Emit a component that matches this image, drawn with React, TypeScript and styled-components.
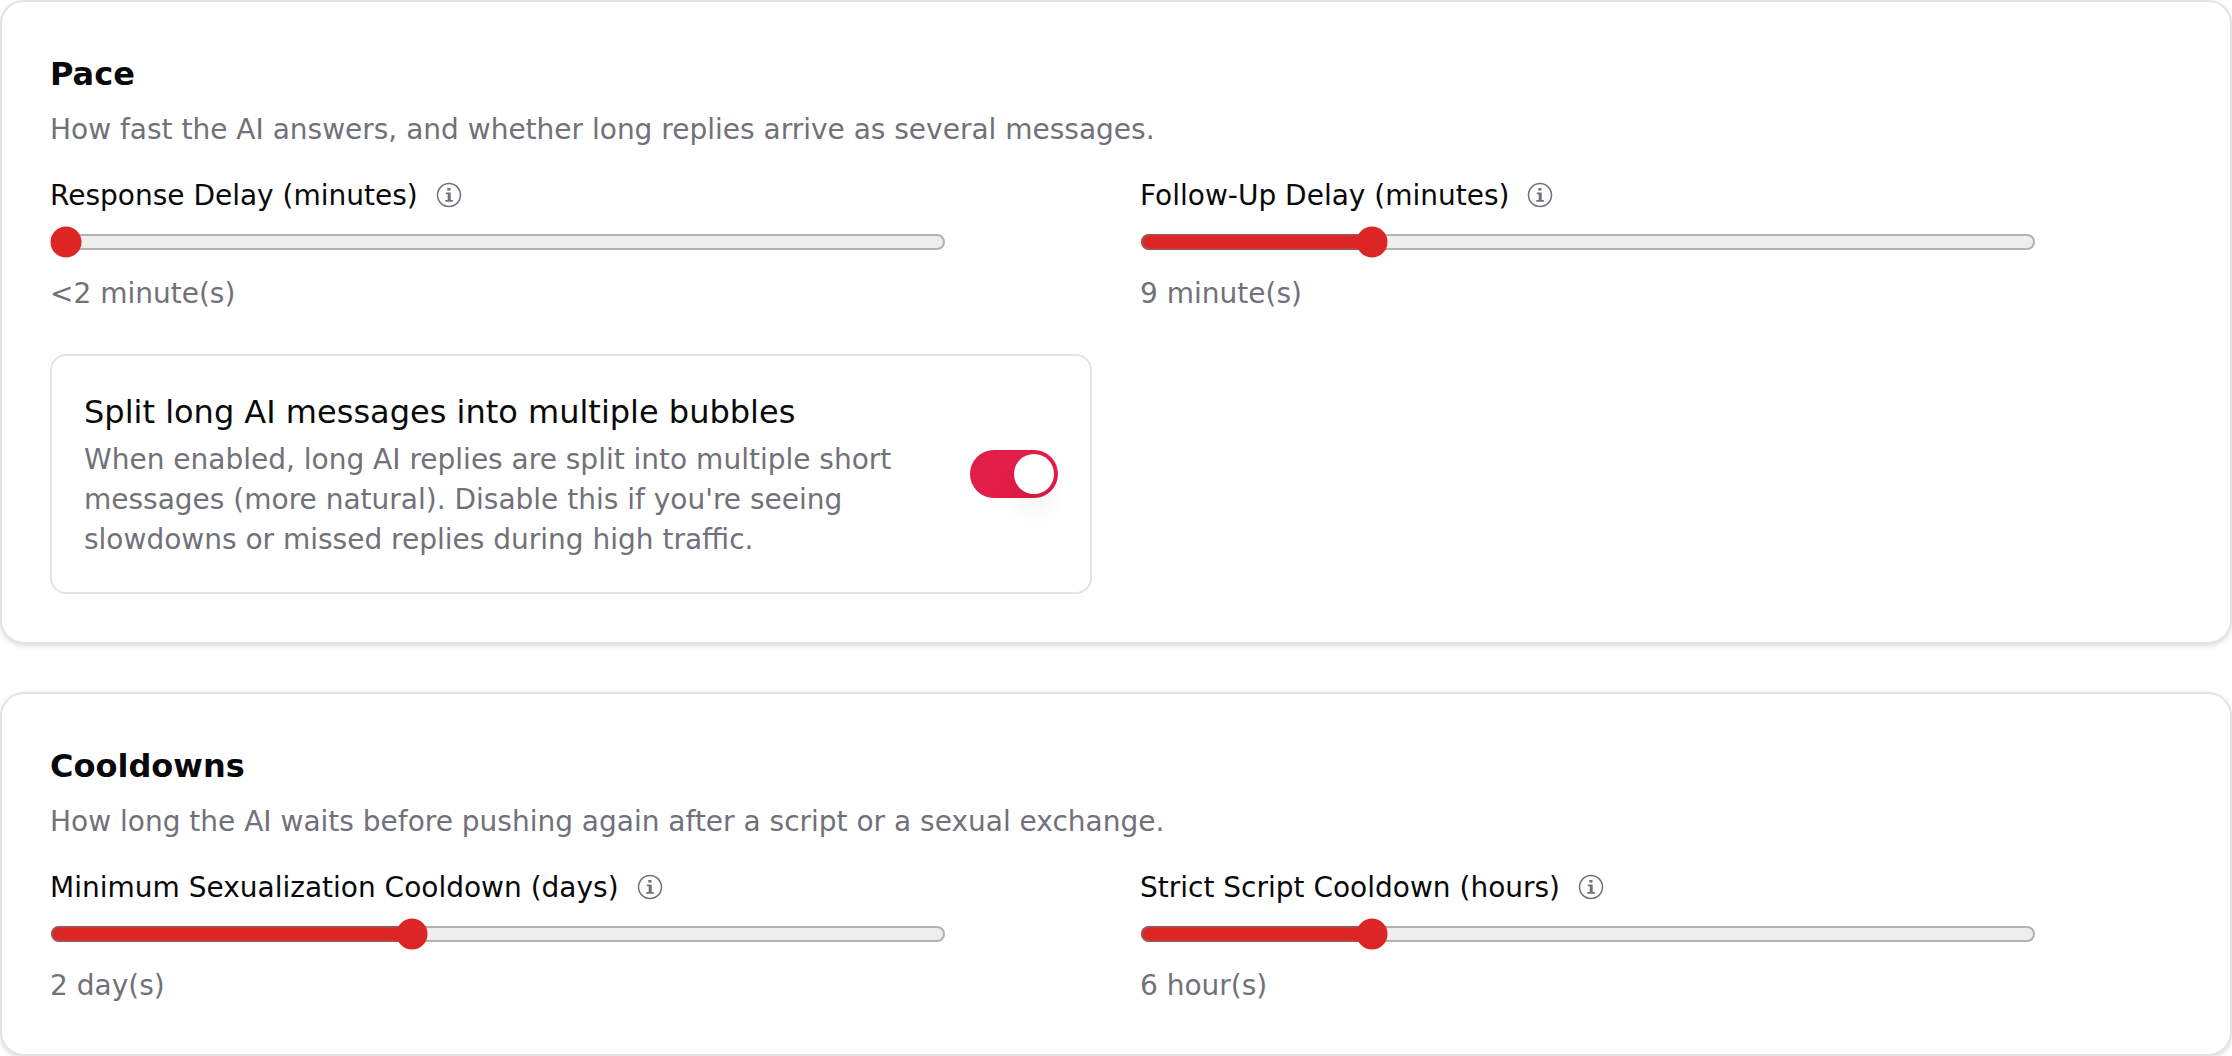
import React, { useState } from "react";
import styled, { createGlobalStyle } from "styled-components";

const GlobalStyle = createGlobalStyle`
  *, *::before, *::after { box-sizing: border-box; }
  body {
    margin: 0;
    background: #ffffff;
    color: #09090b;
    font-family: "DejaVu Sans", sans-serif;
    font-size: 28px;
    line-height: 40px;
  }
`;

const Page = styled.main`
  display: flex;
  flex-direction: column;
  gap: 48px;
`;

const Card = styled.section`
  padding: 48px;
  border: 2px solid #e4e4e7;
  border-radius: 24px;
  background: #ffffff;
  box-shadow: 0 2px 6px rgba(0, 0, 0, 0.1), 0 2px 4px -2px rgba(0, 0, 0, 0.1);
`;

const CardHeader = styled.header`
  display: flex;
  flex-direction: column;
  gap: 12px;
  margin-bottom: 32px;
`;

const CardTitle = styled.h3`
  margin: 0;
  font-size: 32px;
  line-height: 48px;
  font-weight: 700;
`;

const Muted = styled.p`
  margin: 0;
  color: #71717a;
`;

const Grid = styled.div`
  display: grid;
  grid-template-columns: repeat(2, minmax(0, 1fr));
  gap: 40px 48px;
`;

const Field = styled.div`
  display: flex;
  flex-direction: column;
  gap: 16px;
`;

const LabelRow = styled.div`
  display: flex;
  align-items: center;
  gap: 16px;
  line-height: 28px;
`;

const InfoButton = styled.button`
  display: flex;
  padding: 0 2px 2px;
  border: 0;
  background: none;
  color: #71717a;
  cursor: help;
`;

const Range = styled.input`
  zoom: 2;
  width: 100%;
  max-width: 448px;
  height: 16px;
  margin: 0;
  accent-color: #dc2626;
`;

const Value = styled.output`
  color: #71717a;
`;

const ToggleBox = styled.div`
  display: flex;
  align-items: center;
  justify-content: space-between;
  gap: 32px;
  padding: 32px;
  border: 2px solid #e4e4e7;
  border-radius: 16px;
`;

const ToggleText = styled.div`
  display: flex;
  flex-direction: column;
  gap: 4px;
`;

const ToggleLabel = styled.label`
  font-size: 32px;
  line-height: 48px;
`;

const Switch = styled.input`
  flex: none;
  display: flex;
  appearance: none;
  width: 88px;
  height: 48px;
  margin: 0;
  padding: 4px;
  border-radius: 24px;
  background: #e4e4e7;
  cursor: pointer;

  &::before {
    content: "";
    width: 40px;
    height: 40px;
    border-radius: 50%;
    background: #ffffff;
    box-shadow: 0 20px 30px -6px rgba(0, 0, 0, 0.1), 0 8px 12px -8px rgba(0, 0, 0, 0.1);
  }

  &:checked {
    justify-content: flex-end;
    background: #e11d48;
  }
`;

function InfoIcon() {
  return (
    <svg width="26" height="26" viewBox="0 0 26 26" fill="none" aria-hidden="true">
      <circle cx="13" cy="13" r="11.5" stroke="currentColor" strokeWidth="1.5" />
      <path d="M11.3 6h3.2v2.6h-3.2z" fill="currentColor" />
      <path d="M9.8 11.3h3.8v7.4M9.3 18.9h7.6" stroke="currentColor" strokeWidth="1.7" />
      <path d="M11.7 11h2.8v8h-2.8z" fill="currentColor" />
    </svg>
  );
}

type SliderProps = {
  id: string;
  label: string;
  hint: string;
  min: number;
  max: number;
  initial: number;
  format: (value: number) => string;
};

function SliderField({ id, label, hint, min, max, initial, format }: SliderProps) {
  const [value, setValue] = useState(initial);
  return (
    <Field>
      <LabelRow>
        <label htmlFor={id}>{label}</label>
        <InfoButton type="button" aria-label={hint}>
          <InfoIcon />
        </InfoButton>
      </LabelRow>
      <Range
        id={id}
        type="range"
        min={min}
        max={max}
        value={value}
        onChange={(e) => setValue(Number(e.target.value))}
      />
      <Value htmlFor={id}>{format(value)}</Value>
    </Field>
  );
}

export default function App() {
  const [split, setSplit] = useState(true);
  return (
    <>
      <GlobalStyle />
      <Page>
        <Card>
          <CardHeader>
            <CardTitle>Pace</CardTitle>
            <Muted>How fast the AI answers, and whether long replies arrive as several messages.</Muted>
          </CardHeader>
          <Grid>
            <SliderField
              id="response-delay"
              label="Response Delay (minutes)"
              hint="About response delay"
              min={1}
              max={30}
              initial={1}
              format={(v) => (v < 2 ? "<2 minute(s)" : `${v} minute(s)`)}
            />
            <SliderField
              id="follow-up-delay"
              label="Follow-Up Delay (minutes)"
              hint="About follow-up delay"
              min={2}
              max={30}
              initial={9}
              format={(v) => `${v} minute(s)`}
            />
            <ToggleBox>
              <ToggleText>
                <ToggleLabel htmlFor="split-messages">Split long AI messages into multiple bubbles</ToggleLabel>
                <Muted id="split-help">
                  When enabled, long AI replies are split into multiple short messages (more natural). Disable this if
                  you're seeing slowdowns or missed replies during high traffic.
                </Muted>
              </ToggleText>
              <Switch
                id="split-messages"
                type="checkbox"
                role="switch"
                aria-describedby="split-help"
                checked={split}
                onChange={(e) => setSplit(e.target.checked)}
              />
            </ToggleBox>
          </Grid>
        </Card>
        <Card>
          <CardHeader>
            <CardTitle>Cooldowns</CardTitle>
            <Muted>How long the AI waits before pushing again after a script or a sexual exchange.</Muted>
          </CardHeader>
          <Grid>
            <SliderField
              id="minimum-cooldown"
              label="Minimum Sexualization Cooldown (days)"
              hint="About minimum cooldown"
              min={0}
              max={5}
              initial={2}
              format={(v) => `${v} day(s)`}
            />
            <SliderField
              id="script-cooldown"
              label="Strict Script Cooldown (hours)"
              hint="About script cooldown"
              min={0}
              max={24}
              initial={6}
              format={(v) => `${v} hour(s)`}
            />
          </Grid>
        </Card>
      </Page>
    </>
  );
}
